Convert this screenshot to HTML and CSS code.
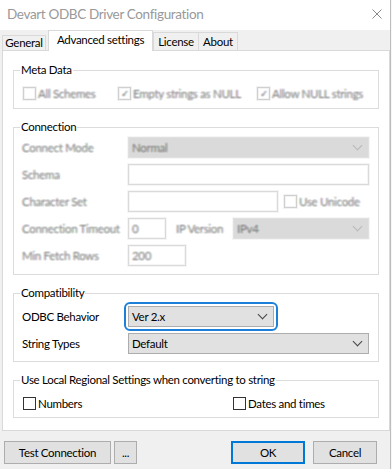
FILE: index.html
```html
<!DOCTYPE html>
<html lang="en">
<head>
    <meta charset="UTF-8">
    <title>Devart ODBC Driver Configuration</title>
    <link rel="stylesheet" href="styles.css">
</head>
<body>
    <div class="window">
        <div class="titlebar">
            <span class="title">Devart ODBC Driver Configuration</span>
            <svg class="close" width="10" height="10" viewBox="0 0 10 10">
                <path d="M0.5 0.5 L9.5 9.5 M9.5 0.5 L0.5 9.5" stroke="#8a8a8a" stroke-width="1" fill="none"/>
            </svg>
        </div>

        <div class="tabs">
            <div class="tab general">General</div>
            <div class="tab active">Advanced settings</div>
            <div class="tab license">License</div>
            <div class="tab about">About</div>
        </div>

        <div class="panel">
            <!-- Meta Data -->
            <fieldset class="group">
                <legend>Meta Data</legend>
                <div class="checks meta blur">
                    <label class="check w95"><span class="box"></span>All Schemes</label>
                    <label class="check w139"><span class="box checked">&#10003;</span>Empty strings as NULL</label>
                    <label class="check"><span class="box checked">&#10003;</span>Allow NULL strings</label>
                </div>
            </fieldset>

            <!-- Connection -->
            <fieldset class="group">
                <legend>Connection</legend>
                <div class="rows conn blur">
                    <div class="row">
                        <span class="label">Connect Mode</span>
                        <div class="combo disabled grow"><span>Normal</span><span class="arrow"></span></div>
                    </div>
                    <div class="row">
                        <span class="label">Schema</span>
                        <div class="input grow"></div>
                    </div>
                    <div class="row">
                        <span class="label">Character Set</span>
                        <div class="input charset"></div>
                        <label class="check unicode"><span class="box"></span>Use Unicode</label>
                    </div>
                    <div class="row">
                        <span class="label">Connection Timeout</span>
                        <div class="input timeout">0</div>
                        <span class="ip-label">IP Version</span>
                        <div class="combo disabled grow"><span>IPv4</span><span class="arrow"></span></div>
                    </div>
                    <div class="row">
                        <span class="label">Min Fetch Rows</span>
                        <div class="input fetch">200</div>
                    </div>
                </div>
            </fieldset>

            <!-- Compatibility -->
            <fieldset class="group">
                <legend>Compatibility</legend>
                <div class="rows compat">
                    <div class="row">
                        <span class="label">ODBC Behavior</span>
                        <div class="focus">
                            <div class="combo behavior"><span>Ver 2.x</span><span class="arrow"></span></div>
                        </div>
                    </div>
                    <div class="row">
                        <span class="label">String Types</span>
                        <div class="combo grow"><span>Default</span><span class="arrow"></span></div>
                    </div>
                </div>
            </fieldset>

            <!-- Regional settings -->
            <fieldset class="group last">
                <legend>Use Local Regional Settings when converting to string</legend>
                <div class="checks local">
                    <label class="check w209"><span class="box"></span>Numbers</label>
                    <label class="check"><span class="box"></span>Dates and times</label>
                </div>
            </fieldset>
        </div>

        <div class="footer">
            <button class="btn test">Test Connection</button>
            <button class="btn more">...</button>
            <span class="spacer"></span>
            <button class="btn ok">OK</button>
            <button class="btn cancel">Cancel</button>
        </div>
    </div>
</body>
</html>
```

FILE: styles.css
```css
body {
    margin: 0;
    background-color: #f7f7f7;
    font-family: "Segoe UI", Lato, sans-serif;
    font-size: 11.5px;
    letter-spacing: -0.3px;
    color: #000;
}

.window {
    width: 391px;
    height: 469px;
    background-color: #f0f0f0;
    border-right: 1px solid #bdbdbd;
    box-sizing: border-box;
}

.titlebar {
    height: 30px;
    background-color: #fff;
    display: flex;
    align-items: center;
    justify-content: space-between;
    padding: 0 8px 2px 7px;
    box-sizing: border-box;
}

.title {
    font-size: 13.5px;
    letter-spacing: -0.35px;
    color: #999;
}

/* Tabs */
.tabs {
    height: 20px;
    display: flex;
    align-items: flex-end;
    padding-left: 2px;
}

.tab {
    border: 1px solid #d9d9d9;
    border-bottom: none;
    background-color: #f0f0f0;
    box-sizing: border-box;
    height: 18px;
    line-height: 18px;
    text-align: center;
    white-space: nowrap;
}

.tab.general {
    width: 44px;
    height: 15px;
    line-height: 14px;
}

.tab.active {
    width: 105px;
    height: 21px;
    line-height: 17px;
    margin-left: 2px;
    margin-bottom: -1px;
    background-color: #fff;
    position: relative;
    z-index: 1;
}

.tab.license {
    width: 46px;
}

.tab.about {
    width: 40px;
    margin-left: -1px;
}

/* Panel */
.panel {
    width: 388px;
    height: 381px;
    margin-left: 2px;
    background-color: #fff;
    border: 1px solid #d9d9d9;
    box-sizing: border-box;
    padding: 11px 10px 0 10px;
}

.group {
    margin: 0 0 10px 0;
    padding: 0 9px 7px 8px;
    border: 1px solid #dcdcdc;
    min-width: 0;
}

.group.last {
    margin-bottom: 0;
}

.group legend {
    padding: 0 1px;
    margin-left: -2px;
    line-height: 16px;
}

/* Checkboxes */
.checks {
    display: flex;
    align-items: center;
    height: 16px;
}

.checks.meta {
    margin-top: 7px;
}

.checks.local {
    margin-top: 7px;
    margin-bottom: -1px;
}

.check {
    display: flex;
    align-items: center;
    white-space: nowrap;
}

.w95 { width: 95px; }
.w139 { width: 139px; }
.w209 { width: 210px; }

.box {
    width: 13px;
    height: 13px;
    border: 1px solid #333;
    box-sizing: border-box;
    background-color: #fff;
    margin: 0 2px 0 1px;
    font-size: 10px;
    line-height: 11px;
    text-align: center;
    color: #777;
}

/* disabled parts look smeared in the screenshot */
.blur {
    color: rgba(90, 90, 90, 0.22);
    text-shadow:
        1px 0 0 rgba(90, 90, 90, 0.14),
        -1px 0 0 rgba(90, 90, 90, 0.14),
        0 1px 0 rgba(90, 90, 90, 0.14),
        0 -1px 0 rgba(90, 90, 90, 0.14),
        1px 1px 0 rgba(90, 90, 90, 0.08),
        -1px -1px 0 rgba(90, 90, 90, 0.08),
        1px -1px 0 rgba(90, 90, 90, 0.08),
        -1px 1px 0 rgba(90, 90, 90, 0.08),
        2px 0 0 rgba(90, 90, 90, 0.05),
        -2px 0 0 rgba(90, 90, 90, 0.05);
}

.blur .box {
    border-color: #d0d0d0;
    box-shadow: 0 0 0 1px rgba(0, 0, 0, 0.05), inset 0 0 0 1px rgba(0, 0, 0, 0.05);
    color: rgba(90, 90, 90, 0.3);
}

.blur .input {
    border-color: #dadada;
    box-shadow: 0 0 0 1px rgba(0, 0, 0, 0.04), inset 0 0 0 1px rgba(0, 0, 0, 0.04);
}

.blur .combo.disabled {
    background-color: #dadada;
    border-color: #e0e0e0;
    box-shadow: 0 0 0 1px rgba(0, 0, 0, 0.035);
}

.blur .arrow {
    border-color: #b8b8b8;
}

/* Form rows */
.rows {
    display: flex;
    flex-direction: column;
    gap: 6px;
}

.rows.conn {
    padding-top: 2px;
    padding-bottom: 1px;
}

.rows.compat {
    padding-top: 5px;
}

.row {
    display: flex;
    align-items: center;
    height: 21px;
    white-space: nowrap;
}

.label {
    width: 106px;
    flex: none;
}

.grow {
    flex: 1;
}

.input {
    height: 21px;
    border: 1px solid #c2c2c2;
    box-sizing: border-box;
    background-color: #fff;
    padding-left: 3px;
    line-height: 19px;
}

.input.charset { width: 150px; }
.input.timeout { width: 38px; }
.input.fetch { width: 58px; }

.check.unicode {
    margin-left: 5px;
}

.ip-label {
    width: 57px;
    margin-left: 10px;
    flex: none;
}

.combo {
    height: 21px;
    border: 1px solid #adadad;
    box-sizing: border-box;
    background-color: #e1e1e1;
    display: flex;
    align-items: center;
    justify-content: space-between;
    padding: 0 7px 0 3px;
}

.combo.behavior {
    width: 146px;
}

.arrow {
    width: 6px;
    height: 6px;
    border-right: 1px solid #444;
    border-bottom: 1px solid #444;
    transform: translateY(-2px) rotate(45deg);
}

.focus {
    margin: -4px;
    padding: 2px;
    border: 2px solid #1c7fd8;
    border-radius: 6px;
}

/* Footer buttons */
.footer {
    display: flex;
    padding: 10px 13px 0 4px;
}

.btn {
    height: 23px;
    font-family: inherit;
    font-size: 11.5px;
    letter-spacing: -0.3px;
    background-color: #e1e1e1;
    border: 1px solid #adadad;
    padding: 0;
    color: #000;
}

.btn.test { width: 107px; }
.btn.more { width: 23px; margin-left: 3px; }
.spacer { flex: 1; }
.btn.ok { width: 74px; border: 2px solid #0078d7; }
.btn.cancel { width: 64px; margin-left: 8px; }
```
